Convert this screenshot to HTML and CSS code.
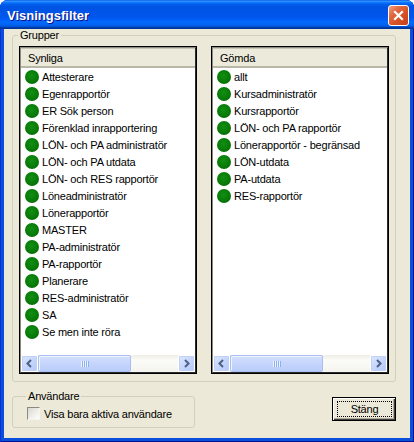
FILE: index.html
```html
<!DOCTYPE html>
<html lang="sv">
<head>
<meta charset="utf-8">
<title>Visningsfilter</title>
<link rel="stylesheet" href="styles.css">
</head>
<body>
<div class="window">
  <div class="titlebar">
    <span class="title">Visningsfilter</span>
    <button class="close" aria-label="Stäng">
      <svg width="13" height="13" viewBox="0 0 13 13"><path d="M3 3 L10 10 M10 3 L3 10" stroke="#fff" stroke-width="2.2" stroke-linecap="square" fill="none"/></svg>
    </button>
  </div>
  <div class="body">
    <fieldset class="group grupper">
      <legend>Grupper</legend>
      <div class="lists">
        <div class="listbox">
          <div class="lb-inner">
            <div class="lb-header"><span>Synliga</span></div>
            <ul class="items">
              <li><span class="dot"></span>Attesterare</li>
              <li><span class="dot"></span>Egenrapportör</li>
              <li><span class="dot"></span>ER Sök person</li>
              <li><span class="dot"></span>Förenklad inrapportering</li>
              <li><span class="dot"></span>LÖN- och PA administratör</li>
              <li><span class="dot"></span>LÖN- och PA utdata</li>
              <li><span class="dot"></span>LÖN- och RES rapportör</li>
              <li><span class="dot"></span>Löneadministratör</li>
              <li><span class="dot"></span>Lönerapportör</li>
              <li><span class="dot"></span>MASTER</li>
              <li><span class="dot"></span>PA-administratör</li>
              <li><span class="dot"></span>PA-rapportör</li>
              <li><span class="dot"></span>Planerare</li>
              <li><span class="dot"></span>RES-administratör</li>
              <li><span class="dot"></span>SA</li>
              <li><span class="dot"></span>Se men inte röra</li>
            </ul>
            <div class="hscroll">
              <span class="sb-btn"><svg width="15" height="15" viewBox="0 0 15 15"><path d="M9 4 L5.5 7.5 L9 11" stroke="#4D6185" stroke-width="2" fill="none"/></svg></span>
              <span class="thumb"><svg width="8" height="6" viewBox="0 0 8 6"><path d="M0.5 0 V6 M2.5 0 V6 M4.5 0 V6 M6.5 0 V6" stroke="#EEF4FE" stroke-width="1"/><path d="M1.5 0 V6 M3.5 0 V6 M5.5 0 V6 M7.5 0 V6" stroke="#8CB0F8" stroke-width="1"/></svg></span>
              <span class="track"></span>
              <span class="sb-btn"><svg width="15" height="15" viewBox="0 0 15 15"><path d="M6 4 L9.5 7.5 L6 11" stroke="#4D6185" stroke-width="2" fill="none"/></svg></span>
            </div>
          </div>
        </div>
        <div class="listbox">
          <div class="lb-inner">
            <div class="lb-header"><span>Gömda</span></div>
            <ul class="items">
              <li><span class="dot"></span>allt</li>
              <li><span class="dot"></span>Kursadministratör</li>
              <li><span class="dot"></span>Kursrapportör</li>
              <li><span class="dot"></span>LÖN- och PA rapportör</li>
              <li><span class="dot"></span>Lönerapportör - begränsad</li>
              <li><span class="dot"></span>LÖN-utdata</li>
              <li><span class="dot"></span>PA-utdata</li>
              <li><span class="dot"></span>RES-rapportör</li>
            </ul>
            <div class="hscroll">
              <span class="sb-btn"><svg width="15" height="15" viewBox="0 0 15 15"><path d="M9 4 L5.5 7.5 L9 11" stroke="#4D6185" stroke-width="2" fill="none"/></svg></span>
              <span class="thumb"><svg width="8" height="6" viewBox="0 0 8 6"><path d="M0.5 0 V6 M2.5 0 V6 M4.5 0 V6 M6.5 0 V6" stroke="#EEF4FE" stroke-width="1"/><path d="M1.5 0 V6 M3.5 0 V6 M5.5 0 V6 M7.5 0 V6" stroke="#8CB0F8" stroke-width="1"/></svg></span>
              <span class="track"></span>
              <span class="sb-btn"><svg width="15" height="15" viewBox="0 0 15 15"><path d="M6 4 L9.5 7.5 L6 11" stroke="#4D6185" stroke-width="2" fill="none"/></svg></span>
            </div>
          </div>
        </div>
      </div>
    </fieldset>
    <div class="bottom">
      <fieldset class="group anv">
        <legend>Användare</legend>
        <label class="check"><span class="box"></span><span>Visa bara aktiva användare</span></label>
      </fieldset>
      <button class="btn"><span class="focus">Stäng</span></button>
    </div>
  </div>
</div>
</body>
</html>
```
FILE: styles.css
```css
html, body {
  margin: 0;
  padding: 0;
  background: #ffffff;
}
body {
  width: 414px;
  height: 442px;
  overflow: hidden;
  font-family: "Liberation Sans", Arial, sans-serif;
  font-size: 11px;
  letter-spacing: -0.2px;
  color: #000;
}
.window {
  width: 414px;
  height: 442px;
  display: flex;
  flex-direction: column;
  border-radius: 8px 8px 0 0;
  overflow: hidden;
  background: #0A4FDB;
  box-shadow: inset 1px 0 #0831D9, inset -1px 0 #00138C, inset 0 -1px #00138C;
}
.titlebar {
  flex: none;
  height: 29px;
  box-sizing: border-box;
  padding: 2px 5px 0 7px;
  display: flex;
  align-items: center;
  justify-content: space-between;
  background: linear-gradient(to bottom, #0058ee 0%, #3593ff 4%, #288eff 6%, #127dff 8%, #036ffc 10%, #0262ee 14%, #0057e5 20%, #0054e3 24%, #0055eb 56%, #005bf5 66%, #026afe 76%, #0062ef 86%, #0052d6 92%, #0040ab 94%, #003092 100%);
}
.title {
  font-family: "Liberation Sans", Arial, sans-serif;
  font-weight: bold;
  font-size: 13px;
  letter-spacing: 0;
  color: #fff;
  text-shadow: 1px 1px #0F1089;
}
.close {
  width: 21px;
  height: 21px;
  box-sizing: border-box;
  padding: 0;
  border: 1px solid #fff;
  border-radius: 3px;
  display: flex;
  align-items: center;
  justify-content: center;
  background: linear-gradient(135deg, #F0A084 0%, #E26A42 30%, #D75225 60%, #C4401A 100%);
}
.body {
  flex: 1;
  margin: 0 4px 4px 4px;
  background: #ECE9D8;
  padding: 0 14px 0 8px;
}
fieldset.group {
  margin: 0;
  border: 1px solid #D0D0BF;
  border-radius: 3px;
  min-width: 0;
  box-sizing: border-box;
}
fieldset.group legend {
  padding: 0 2px;
  margin-left: -1px;
  height: 13px;
  line-height: 13px;
  font-size: 11px;
  color: #000;
}
.grupper {
  width: 384px;
  padding: 4px 6px 7px 6px;
}
.lists {
  display: flex;
  gap: 14px;
}
.listbox {
  width: 178px;
  height: 328px;
  box-sizing: border-box;
  border: 1px solid #000;
  background: #fff;
}
.lb-inner {
  height: 100%;
  box-sizing: border-box;
  border: 1px solid;
  border-color: #8E8B7F #2b2b2b #2b2b2b #8E8B7F;
  display: flex;
  flex-direction: column;
}
.lb-header {
  flex: none;
  height: 20px;
  box-sizing: border-box;
  padding: 2px 0 0 7px;
  background: linear-gradient(to bottom, #C9C6B6 0, #C9C6B6 1px, #EBEADB 1px, #EBEADB 100%);
  border-bottom: 2px solid #B9B6A5;
  display: flex;
  align-items: center;
}
.items {
  flex: 1;
  margin: 0;
  padding: 0;
  list-style: none;
}
.items li {
  height: 17px;
  display: flex;
  align-items: center;
  padding-left: 4px;
  gap: 3px;
  white-space: nowrap;
}
.dot {
  flex: none;
  width: 14px;
  height: 14px;
  border-radius: 50%;
  background: radial-gradient(circle at 45% 40%, #128F12 0%, #087A08 55%, #045E04 100%);
}
.hscroll {
  flex: none;
  height: 17px;
  display: flex;
  background: linear-gradient(to bottom, #EEEDE5 0%, #FBFBF8 30%, #F5F4EF 100%);
}
.sb-btn {
  flex: none;
  width: 17px;
  height: 17px;
  box-sizing: border-box;
  border: 1px solid #fff;
  border-radius: 2px;
  background: linear-gradient(135deg, #DDE7FE 0%, #C6D6FC 50%, #B4C8F7 100%);
  box-shadow: inset 0 0 0 1px #C0D1F8;
  display: flex;
  align-items: center;
  justify-content: center;
}
.thumb {
  flex: none;
  width: 93px;
  height: 17px;
  box-sizing: border-box;
  border: 1px solid #A9BFF3;
  border-radius: 2px;
  background: linear-gradient(to bottom, #D3DFFD 0%, #C5D5FC 50%, #BACDF9 100%);
  box-shadow: inset 1px 1px #EEF3FE;
  display: flex;
  align-items: center;
  justify-content: center;
}
.track {
  flex: 1;
}
.bottom {
  margin-top: 8px;
  display: flex;
  justify-content: space-between;
  align-items: flex-start;
}
.anv {
  width: 183px;
  padding: 4px 6px 7px 14px;
}
.check {
  display: flex;
  align-items: center;
  gap: 4px;
  height: 13px;
}
.box {
  flex: none;
  width: 13px;
  height: 13px;
  box-sizing: border-box;
  border: 1px solid;
  border-color: #8A8A85 #F4F4F0 #F4F4F0 #8A8A85;
  background: linear-gradient(135deg, #D8D7CF 0%, #EDECE6 50%, #FFFFFF 100%);
}
.btn {
  margin-top: 7px;
  width: 64px;
  height: 24px;
  box-sizing: border-box;
  padding: 3px 3px 3px 4px;
  border: 1px solid #000;
  background: #ECE9D8;
  box-shadow: inset 1px 1px #fff, inset -1px -1px #404040, inset -2px -2px #ACA899;
  font-family: "Liberation Sans", Arial, sans-serif;
  font-size: 11px;
  letter-spacing: -0.2px;
  color: #000;
  display: flex;
}
.focus {
  flex: 1;
  border: 1px dotted #000;
  display: flex;
  align-items: center;
  justify-content: center;
}
```
